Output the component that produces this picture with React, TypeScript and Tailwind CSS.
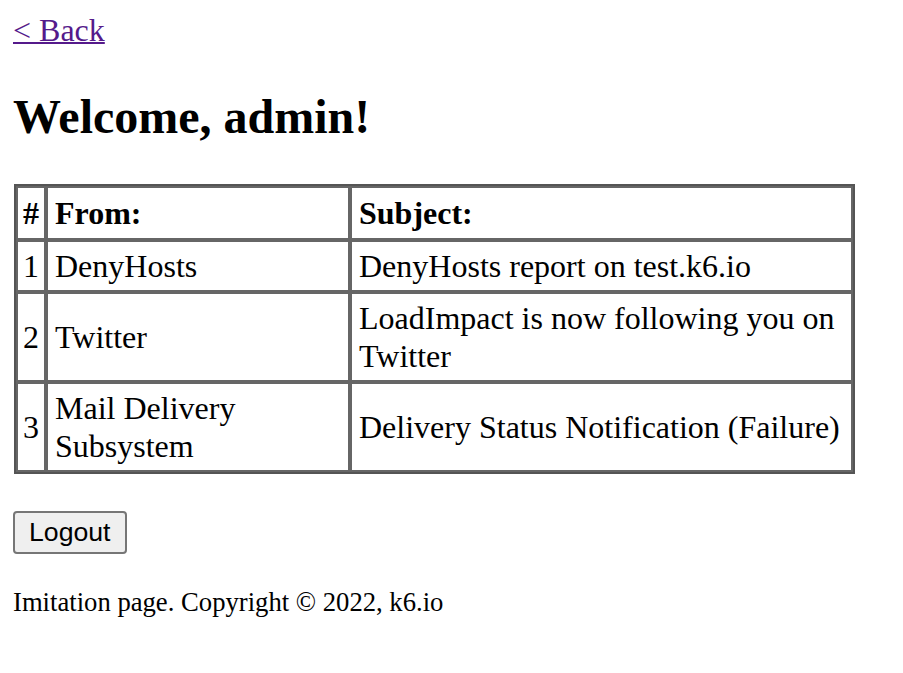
export default function App() {
  const rows = [
    { n: '1', from: 'DenyHosts', subject: 'DenyHosts report on test.k6.io' },
    { n: '2', from: 'Twitter', subject: 'LoadImpact is now following you on Twitter' },
    { n: '3', from: 'Mail Delivery Subsystem', subject: 'Delivery Status Notification (Failure)' },
  ]

  return (
    <div className="min-h-screen bg-white pt-[12px] px-[13px] text-black font-['Liberation_Serif',serif]">
      <div className="text-[32px] leading-[37px]">
        <a href="#" className="text-[#551a8b] underline decoration-[2px]">&lt; Back</a>
      </div>

      <h1 className="mt-[40px] text-[48px] leading-[55px] font-bold">Welcome, admin!</h1>

      {/* Messages */}
      <table className="mt-[40px] ml-px w-[841px] table-fixed border-separate border-spacing-0 border-2 border-[#555] text-[32px] leading-[38px]">
        <thead>
          <tr>
            <th className="w-[30px] border-2 border-[#666] px-[5px] py-[6px] text-left font-bold">#</th>
            <th className="w-[304px] border-2 border-[#666] px-[7px] py-[6px] text-left font-bold">From:</th>
            <th className="border-2 border-[#666] px-[7px] py-[6px] text-left font-bold">Subject:</th>
          </tr>
        </thead>
        <tbody>
          {rows.map((r) => (
            <tr key={r.n}>
              <td className="border-2 border-[#666] px-[5px] py-[5px] align-middle">{r.n}</td>
              <td className="border-2 border-[#666] px-[7px] py-[5px] align-middle">{r.from}</td>
              <td className="border-2 border-[#666] px-[7px] py-[5px] align-middle">{r.subject}</td>
            </tr>
          ))}
        </tbody>
      </table>

      <div className="mt-[37px]">
        <button className="border-2 border-[#767676] rounded-[4px] bg-[#efefef] px-[14px] py-[4px] text-[26.67px] leading-[31px] font-['Liberation_Sans',Arial,sans-serif]">
          Logout
        </button>
      </div>

      <p className="mt-[33px] text-[26.67px] leading-[31px]">Imitation page. Copyright © 2022, k6.io</p>
    </div>
  )
}
